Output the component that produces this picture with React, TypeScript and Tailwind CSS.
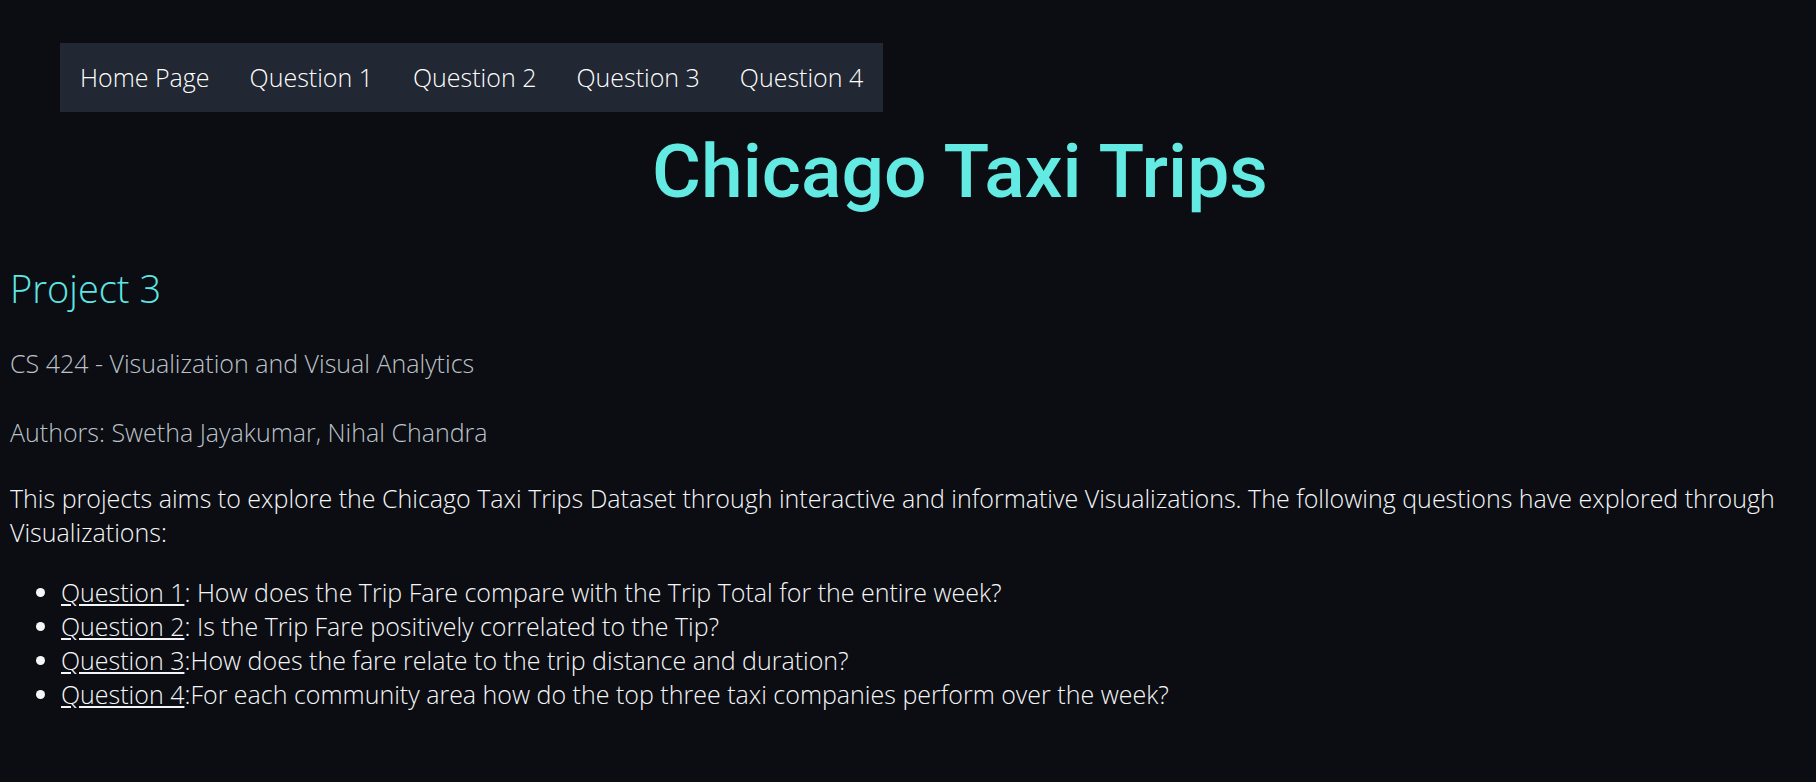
import React from 'react'

const navLinks = ["Home Page", "Question 1", "Question 2", "Question 3", "Question 4"]

const questions = [
  { label: "Question 1", sep: ": ", text: "How does the Trip Fare compare with the Trip Total for the entire week?" },
  { label: "Question 2", sep: ": ", text: "Is the Trip Fare positively correlated to the Tip?" },
  { label: "Question 3", sep: ":", text: "How does the fare relate to the trip distance and duration?" },
  { label: "Question 4", sep: ":", text: "For each community area how do the top three taxi companies perform over the week?" },
]

const App = () => {
  return (
    <div className="min-h-[782px] bg-[#0b0d12] font-['Open_Sans',sans-serif] font-light text-[#f5f6f8] pt-[43px]">
      <nav className="ml-[60px] flex w-fit items-center bg-[#212733] px-[20px] h-[69px] gap-[40px]">
        {navLinks.map((link) => (
          <a key={link} href="#" className="text-[25px] text-white">{link}</a>
        ))}
      </nav>
      <h1 className="mt-[15px] pl-[104px] text-center font-['Roboto',sans-serif] font-medium text-[75px] leading-[89px] text-[#63ebe3]">
        Chicago Taxi Trips
      </h1>
      <div className="px-[10px]">
        <h2 className="mt-[46px] text-[38px] leading-[52px] text-[#5ee6e6]">Project 3</h2>
        <p className="mt-[32px] text-[25px] leading-[34px] text-[#bcc2ca]">CS 424 - Visualization and Visual Analytics</p>
        <p className="mt-[35px] text-[25px] leading-[34px] text-[#bcc2ca]">Authors: Swetha Jayakumar, Nihal Chandra</p>
        <p className="mt-[32px] text-[25px] leading-[34px]">
          This projects aims to explore the Chicago Taxi Trips Dataset through interactive and informative Visualizations. The following questions have explored through Visualizations:
        </p>
        <ul className="mt-[26px] list-disc pl-[51px] text-[25px] leading-[34px]">
          {questions.map((q) => (
            <li key={q.label}>
              <a href="#" className="underline">{q.label}</a>{q.sep}{q.text}
            </li>
          ))}
        </ul>
      </div>
    </div>
  )
}

export default App
